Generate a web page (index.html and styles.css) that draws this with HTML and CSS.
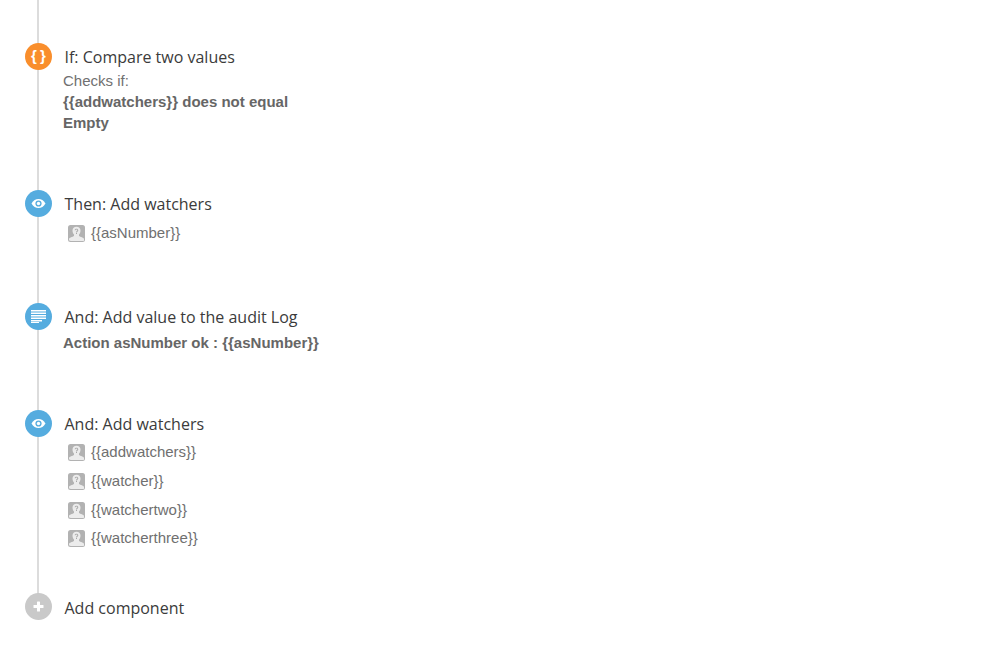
FILE: index.html
```html
<!DOCTYPE html>
<html lang="en">
<head>
<meta charset="utf-8">
<title>Rule components</title>
<link rel="stylesheet" href="styles.css">
</head>
<body>
<svg class="defs" aria-hidden="true">
  <symbol id="avatar" viewBox="0 0 17 17">
    <rect width="17" height="17" rx="2.500" fill="#b2b2b2"/>
    <path d="M1 15.500v-1.600c0-1.500 3.800-2.100 5-3V9.500C5 8.500 4.500 7 4.500 5.500 4.500 3.200 6.200 1.800 8.500 1.800s4 1.400 4 3.700c0 1.500-.5 3-1.500 4v1.400c1.200.9 5 1.500 5 3v1.600c0 .3-.2.5-.5.5h-13c-.3 0-.5-.2-.5-.5Z" fill="#ececec"/>
    <path d="M6.700 5.300c.1-1 .8-1.500 1.800-1.500s1.800.6 1.800 1.500c0 1.200-1.300 1.200-1.300 2.300H8c0-1.600 1.300-1.500 1.300-2.300 0-.4-.3-.7-.8-.7s-.8.300-.9.700ZM8 8.100h1v1H8Z" fill="#a8a8a8"/>
  </symbol>
  <symbol id="eye" viewBox="0 0 15 11">
    <path d="M.5 5.500C2.300 2.400 4.700 1 7.500 1s5.200 1.400 7 4.500c-1.800 3.100-4.200 4.500-7 4.500S2.300 8.600.5 5.500Z" fill="#fff"/>
    <circle cx="7.500" cy="5.500" r="3.100" fill="#55acdf"/>
    <circle cx="7.500" cy="5.500" r="1.700" fill="#fff"/>
  </symbol>
</svg>

<main class="flow">
  <div class="rail"></div>

  <section class="step step-if">
    <div class="badge orange"><span class="braces">{ }</span></div>
    <div class="body">
      <h3 class="title">If: Compare two values</h3>
      <div class="details">
        <p class="detail">Checks if:</p>
        <p class="detail strong">{{addwatchers}} does not equal</p>
        <p class="detail strong">Empty</p>
      </div>
    </div>
  </section>

  <section class="step step-then">
    <div class="badge blue"><svg class="eye"><use href="#eye"/></svg></div>
    <div class="body">
      <h3 class="title">Then: Add watchers</h3>
      <ul class="users">
        <li class="user"><svg class="avatar"><use href="#avatar"/></svg><span>{{asNumber}}</span></li>
      </ul>
    </div>
  </section>

  <section class="step step-log">
    <div class="badge blue">
      <svg class="lines" viewBox="0 0 15 15" fill="#fff"><rect y="1" width="15" height="1.500"/><rect y="3.500" width="15" height="1.500"/><rect y="6" width="15" height="1.500"/><rect y="8.500" width="15" height="1.500"/><rect y="11" width="11" height="1.500"/><rect y="13" width="8" height="1"/></svg>
    </div>
    <div class="body">
      <h3 class="title">And: Add value to the audit Log</h3>
      <p class="detail strong log-text">Action asNumber ok : {{asNumber}}</p>
    </div>
  </section>

  <section class="step step-and">
    <div class="badge blue"><svg class="eye"><use href="#eye"/></svg></div>
    <div class="body">
      <h3 class="title">And: Add watchers</h3>
      <ul class="users">
        <li class="user"><svg class="avatar"><use href="#avatar"/></svg><span>{{addwatchers}}</span></li>
        <li class="user"><svg class="avatar"><use href="#avatar"/></svg><span>{{watcher}}</span></li>
        <li class="user"><svg class="avatar"><use href="#avatar"/></svg><span>{{watchertwo}}</span></li>
        <li class="user"><svg class="avatar"><use href="#avatar"/></svg><span>{{watcherthree}}</span></li>
      </ul>
    </div>
  </section>

  <section class="step step-add">
    <div class="badge grey">
      <svg class="plus" viewBox="0 0 11 11" fill="#fff"><rect x="4" y="0.500" width="3" height="10" rx=".6"/><rect x=".5" y="4" width="10" height="3" rx=".6"/></svg>
    </div>
    <div class="body">
      <h3 class="title">Add component</h3>
    </div>
  </section>
</main>
</body>
</html>
```

FILE: styles.css
```css
* { box-sizing: border-box; }

html, body {
  margin: 0;
  padding: 0;
  background: #fff;
}

body {
  width: 999px;
  height: 653px;
  overflow: hidden;
  font-family: "Liberation Sans", Arial, sans-serif;
  color: #707070;
}

.defs {
  display: block;
  width: 0;
  height: 0;
  overflow: hidden;
}

.flow {
  position: relative;
  padding: 43px 0 0 25px;
}

.rail {
  position: absolute;
  left: 37px;
  top: 0;
  width: 2px;
  height: 600px;
  background: #dcdcdc;
}

.step {
  position: relative;
  display: flex;
  align-items: flex-start;
  gap: 12px;
}

.step-if { height: 147px; }
.step-then { height: 113px; }
.step-log { height: 107px; }
.step-and { height: 183px; }

.badge {
  flex: none;
  width: 27px;
  height: 27px;
  border-radius: 50%;
  display: flex;
  align-items: center;
  justify-content: center;
}

.orange { background: #f98e2c; }
.blue { background: #55acdf; }
.grey { background: #c9c9c9; }

.eye { width: 15px; height: 11px; }
.lines { width: 15px; height: 15px; }
.plus { width: 11px; height: 11px; }

.braces {
  color: #fff;
  font-size: 15px;
  font-weight: 700;
  line-height: 1;
  word-spacing: -1px;
  position: relative;
  top: -1px;
}

.body {
  min-width: 0;
  padding-left: .5px;
}

.title {
  margin: 0;
  padding-top: 3px;
  font-family: "Open Sans", sans-serif;
  font-size: 16px;
  font-weight: 400;
  line-height: 22px;
  color: #3b3b3b;
}

.details {
  padding-top: 2px;
}

.detail {
  margin: 0 0 0 -1.500px;
  font-size: 15px;
  line-height: 21.500px;
  color: #707070;
}

.strong {
  font-weight: 700;
  color: #666;
  position: relative;
  top: -1px;
}

.log-text {
  margin-top: 5px;
}

.users {
  list-style: none;
  margin: 3px 0 0;
  padding: 0 0 0 3.500px;
}

.step-and .users {
  margin-top: 2.500px;
}

.user {
  display: flex;
  align-items: center;
  gap: 6px;
  height: 28.700px;
  font-size: 15px;
  color: #707070;
}

.avatar {
  width: 17px;
  height: 17px;
  flex: none;
  position: relative;
  top: 1px;
}

.step-add .title {
  padding-top: 4px;
}
```
